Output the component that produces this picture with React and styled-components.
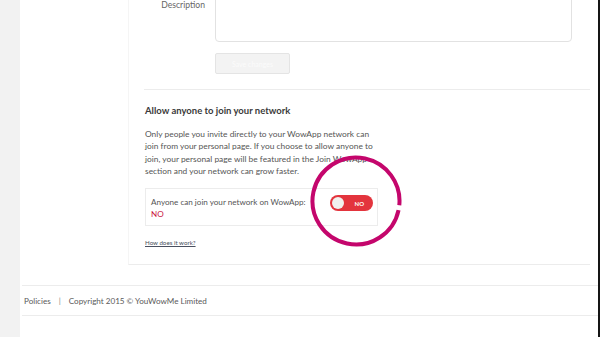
import React from "react";
import styled, { createGlobalStyle } from "styled-components";

const GlobalStyle = createGlobalStyle`
  html, body {
    margin: 0;
    padding: 0;
    background: #ffffff;
    overflow: hidden;
  }
  body {
    font-family: Lato, "Open Sans", "Liberation Sans", sans-serif;
  }
`;

function Toggle({ on }) {
  return (
    <Switch $on={on}>
      <Knob $on={on} />
      <SwitchText>{on ? "YES" : "NO"}</SwitchText>
    </Switch>
  );
}

function Highlight() {
  return (
    <Ring viewBox="0 0 94 94" width="94" height="94">
      <circle
        cx="47"
        cy="47"
        r="43.5"
        fill="none"
        stroke="#c4066c"
        strokeWidth="4"
        strokeDasharray="268 5"
        transform="rotate(12 47 47)"
      />
    </Ring>
  );
}

function App() {
  return (
    <Page>
      <GlobalStyle />
      <LeftStrip />
      <Main>
        <Panel>
          <FormRow>
            <Label>Description</Label>
            <TextArea />
          </FormRow>
          <SaveButton>Save changes</SaveButton>
          <Section>
            <Heading>Allow anyone to join your network</Heading>
            <Paragraph>
              Only people you invite directly to your WowApp network can
              <br />
              join from your personal page. If you choose to allow anyone to
              <br />
              join, your personal page will be featured in the Join WowApp
              <br />
              section and your network can grow faster.
            </Paragraph>
            <Card>
              <CardText>
                <span>Anyone can join your network on WowApp:</span>
                <Status>NO</Status>
              </CardText>
              <Toggle on={false} />
            </Card>
            <HelpLink href="#">How does it work?</HelpLink>
          </Section>
        </Panel>
        <Footer>
          <FooterItem>Policies</FooterItem>
          <Sep>|</Sep>
          <FooterItem>Copyright 2015 © YouWowMe Limited</FooterItem>
        </Footer>
      </Main>
      <Highlight />
    </Page>
  );
}

const Page = styled.div`
  position: relative;
  display: flex;
  width: 600px;
  height: 337px;
  overflow: hidden;
  box-sizing: border-box;
  border-right: 2px solid #151515;
`;

const LeftStrip = styled.div`
  width: 20px;
  flex-shrink: 0;
  background: #f2f2f2;
`;

const Main = styled.div`
  flex: 1;
  display: flex;
  flex-direction: column;
`;

const Panel = styled.div`
  margin: -60px 8px 0 108px;
  padding: 0 18px 0 16px;
  border-left: 1px solid #f5f5f5;
  border-bottom: 1px solid #ececec;
  height: 325px;
  box-sizing: border-box;
`;

const FormRow = styled.div`
  display: grid;
  grid-template-columns: 60px 1fr;
  gap: 10px;
`;

const Label = styled.div`
  text-align: right;
  font-size: 8.6px;
  line-height: 10px;
  color: #666;
  padding-top: 60px;
`;

const TextArea = styled.div`
  height: 100px;
  border: 1px solid #e2e2e2;
  border-radius: 0 0 4px 4px;
  background: #fff;
`;

const SaveButton = styled.button`
  display: block;
  margin: 11px 0 0 70px;
  width: 75px;
  height: 21px;
  padding: 0;
  font-family: inherit;
  font-size: 7px;
  color: #fbfbfb;
  background: #f3f3f3;
  border: 1px solid #e4e4e4;
  border-radius: 2px;
`;

const Section = styled.div`
  margin: 15px -18px 0 -1px;
  padding: 14px 0 0 1px;
  border-top: 1px solid #ececec;
`;

const Heading = styled.h3`
  margin: 0;
  font-size: 9.5px;
  line-height: 13px;
  font-weight: 700;
  color: #3a3a3a;
`;

const Paragraph = styled.p`
  margin: 11px 0 0;
  font-size: 8.4px;
  line-height: 12.3px;
  color: #555;
`;

const Card = styled.div`
  display: flex;
  align-items: flex-start;
  justify-content: space-between;
  width: 233px;
  box-sizing: border-box;
  margin-top: 11px;
  padding: 7px 4px 5px 5px;
  border: 1px solid #ececec;
`;

const CardText = styled.div`
  display: flex;
  flex-direction: column;
  font-size: 8.1px;
  line-height: 12px;
  color: #555;
  white-space: nowrap;
`;

const Status = styled.span`
  color: #c9123f;
`;

const Switch = styled.div`
  position: relative;
  display: flex;
  align-items: center;
  justify-content: flex-end;
  width: 43px;
  height: 16px;
  margin-top: -1px;
  padding-right: 9px;
  box-sizing: border-box;
  border-radius: 8px;
  background: ${(p) => (p.$on ? "#3cb371" : "#e3343d")};
`;

const Knob = styled.span`
  position: absolute;
  top: 2px;
  left: ${(p) => (p.$on ? "29px" : "2px")};
  width: 12px;
  height: 12px;
  border-radius: 50%;
  background: #f1f1ee;
`;

const SwitchText = styled.span`
  font-size: 6px;
  font-weight: 700;
  color: #fff;
`;

const HelpLink = styled.a`
  display: inline-block;
  margin-top: 13px;
  font-size: 6.2px;
  color: #4a5060;
  text-decoration: underline;
`;

const Footer = styled.div`
  display: flex;
  align-items: center;
  margin: 20px 0 0 2px;
  height: 29px;
  padding-left: 2px;
  border-top: 1px solid #ececec;
  border-bottom: 1px solid #ececec;
  font-size: 8.1px;
`;

const FooterItem = styled.span`
  color: #5a5a5a;
`;

const Sep = styled.span`
  margin: 0 8px;
  color: #888;
`;

const Ring = styled.svg`
  position: absolute;
  left: 309px;
  top: 154px;
`;

export default App;
